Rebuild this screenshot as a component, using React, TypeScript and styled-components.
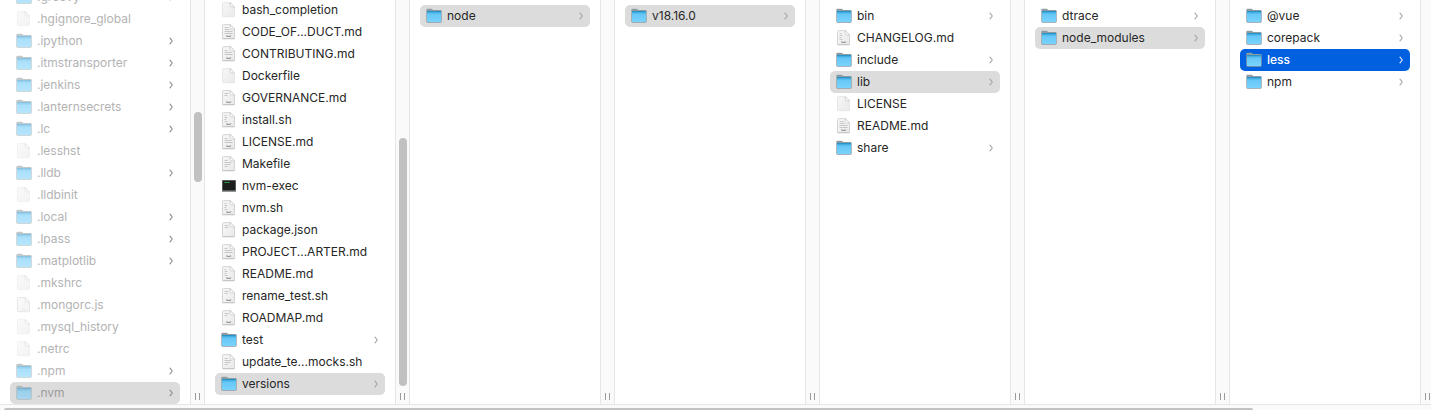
import React, { useState } from 'react';
import styled, { createGlobalStyle, css } from 'styled-components';

const GlobalStyle = createGlobalStyle`
  *, *::before, *::after { box-sizing: border-box; }
  body { margin: 0; background: #fff; font-family: Inter, "Liberation Sans", sans-serif; }
`;

const Browser = styled.main`
  display: flex;
  flex-direction: column;
  height: 100vh;
  overflow: hidden;
`;

const Columns = styled.div`
  display: flex;
  flex: 1;
  min-height: 0;
  overflow: hidden;
`;

const Column = styled.section`
  display: flex;
  flex: 1 0 205px;
  min-height: 0;
`;

const List = styled.ul<{ $fromEnd?: boolean; $padBottom: number }>`
  display: flex;
  flex-direction: column;
  flex: 1;
  min-width: 0;
  justify-content: ${p => (p.$fromEnd ? 'flex-end' : 'flex-start')};
  margin: 0;
  padding: ${p => (p.$fromEnd ? 0 : 5)}px 10px ${p => p.$padBottom}px;
  overflow: hidden;
  list-style: none;
`;

const Item = styled.li`
  flex: none;
`;

type Tone = 'active' | 'path' | 'none';

const Row = styled.button<{ $tone: Tone; $dim?: boolean }>`
  display: flex;
  align-items: center;
  gap: 5px;
  width: 100%;
  height: 22px;
  padding: 0 6px;
  border: 0;
  border-radius: 5px;
  background: transparent;
  color: ${p => (p.$dim ? '#b3b3b3' : '#262626')};
  font: 400 12px/22px Inter, "Liberation Sans", sans-serif;
  text-align: left;
  ${p => p.$tone === 'path' && css`
    background: #dcdcdc;
    color: ${p.$dim ? '#9b9b9b' : '#262626'};
  `}
  ${p => p.$tone === 'active' && css`
    background: #0060df;
    color: #fff;
    font-weight: 500;
  `}
`;

const Name = styled.span`
  flex: 1;
  white-space: nowrap;
`;

const IconBox = styled.svg<{ $dim?: boolean }>`
  flex: none;
  opacity: ${p => (p.$dim ? 0.55 : 1)};
`;

const Arrow = styled.svg<{ $tone: Tone; $dim?: boolean }>`
  flex: none;
  color: ${p => (p.$tone === 'active' ? '#e4edfb' : p.$dim ? '#8c8c8c' : '#a3a3a3')};
`;

const Gutter = styled.div`
  display: flex;
  flex-direction: column;
  flex: none;
  width: 15px;
  border: solid #e6e6e6;
  border-width: 0 1px;
  background: #fafafa;
`;

const Track = styled.div`
  display: flex;
  flex: 1;
  flex-direction: column;
  align-items: center;
`;

const Space = styled.div<{ $share: number }>`
  flex: ${p => p.$share} 0 0;
`;

const Thumb = styled.div<{ $share: number }>`
  flex: ${p => p.$share} 0 0;
  width: 8px;
  border-radius: 4px;
  background: #c1c1c1;
`;

const Grip = styled.div`
  flex: none;
  align-self: center;
  width: 5px;
  height: 7px;
  margin: 5px 0 4px;
  border: solid #9c9c9c;
  border-width: 0 1px;
`;

const BottomTrack = styled.div`
  display: flex;
  flex: none;
  height: 6px;
  padding-top: 3px;
  border-top: 1px solid #e6e6e6;
  background: #fafafa;
`;

const BottomThumb = styled.div<{ $share: number }>`
  flex: ${p => p.$share} 0 0;
  border-radius: 4px 4px 0 0;
  background: #c1c1c1;
`;

type Kind = 'folder' | 'blank' | 'full' | 'two' | 'light' | 'sparse' | 'top' | 'mid' | 'script' | 'exec';
type Entry = [name: string, kind: Kind];

const docLines: Record<string, string> = {
  blank: '',
  full: 'M3.5 3.5h4M3.5 5.5h5M3.5 7.5h8M3.5 9.5h8',
  two: 'M3.5 4.5h3M3.5 6.5h7M3.5 8.5h8',
  light: 'M3.5 3.5h4M3.5 5.5h3',
  sparse: 'M3.5 3.5h2M3.5 5.5h3M3.5 7.5h2M3.5 9.5h3',
  top: 'M3.5 3.5h4M3.5 5.5h4',
  mid: 'M3.5 4.5h3M3.5 6.5h7M3.5 8.5h6M3.5 10.5h3',
  script: 'M7 12.5h2',
};
const labelled: Kind[] = ['full', 'two', 'light', 'sparse'];

function Icon({ kind, dim }: { kind: Kind; dim?: boolean }) {
  if (kind === 'folder') {
    return (
      <IconBox $dim={dim} width="16" height="16" viewBox="0 0 16 16" aria-hidden="true">
        <defs>
          <linearGradient id="folder-front" x1="0" y1="0" x2="0" y2="1">
            <stop offset="0" stopColor="#62c4f5" />
            <stop offset="1" stopColor="#79d3fd" />
          </linearGradient>
        </defs>
        <path d="M.3 2q0-1.3 1.3-1.3h3.6q.8 0 1.3.6l.6.6h7.3q1.3 0 1.3 1.3v10.4q0 1.1-1.1 1.1H1.4q-1.1 0-1.1-1.1z" fill="#8d9ca4" />
        <path d="M1 3h14v2.5H1z" fill="#2793c6" />
        <path d="M1 4.6h14v8.7q0 .7-.7.7H1.7q-.7 0-.7-.7z" fill="url(#folder-front)" />
        <path d="M1 5h14" stroke="#45afe4" strokeWidth=".8" />
      </IconBox>
    );
  }
  if (kind === 'exec') {
    return (
      <IconBox width="16" height="16" viewBox="0 0 16 16" aria-hidden="true">
        <path d="M1 2h14v12H1z" fill="#92979a" />
        <path d="M1.5 2.5h13v10h-13z" fill="#1c1e1e" />
        <path d="M3.5 4.5h5" stroke="#36c257" strokeDasharray="1.3 .5" />
      </IconBox>
    );
  }
  return (
    <IconBox $dim={dim} width="16" height="16" viewBox="0 0 16 16" aria-hidden="true">
      <defs>
        <linearGradient id="paper" x1="0" y1="0" x2="1" y2="1">
          <stop offset="0" stopColor="#f8f8f8" />
          <stop offset="1" stopColor="#e9e9e9" />
        </linearGradient>
      </defs>
      <path
        d="M2.4.6h6.8l4.3 4.3v9q0 .8-.8.8H2.3q-.8 0-.8-.8V1.5q0-.9.9-.9z"
        fill="url(#paper)"
        stroke={kind === 'blank' ? '#e2e2e2' : '#cbcbcb'}
        strokeWidth=".8"
      />
      {kind !== 'blank' && kind !== 'script' && <path d="M1.5 14.7h12" stroke="#b8b8b8" strokeWidth=".7" />}
      <path d="M9.2.6v3.3q0 1 1 1h3.3z" fill="#fff" stroke="#c4c4c4" strokeWidth=".7" />
      <path d={docLines[kind]} stroke="#c2c2c2" strokeWidth=".9" fill="none" />
      {labelled.includes(kind) && <path d="M5 12h1.2l1 .5h1l1-.5h1" fill="none" stroke="#8f8f8f" strokeWidth="1.1" />}
    </IconBox>
  );
}

interface ColumnData {
  label: string;
  entries: Entry[];
  path?: string;
  active?: string;
  dim?: boolean;
  fromEnd?: boolean;
  padBottom?: number;
  thumb?: [number, number, number];
}

const columns: ColumnData[] = [
  {
    label: 'Home', dim: true, fromEnd: true, path: '.nvm', thumb: [112, 70, 206],
    entries: [
      ['.groovy', 'folder'], ['.hgignore_global', 'blank'], ['.ipython', 'folder'],
      ['.itmstransporter', 'folder'], ['.jenkins', 'folder'], ['.lanternsecrets', 'folder'],
      ['.lc', 'folder'], ['.lesshst', 'blank'], ['.lldb', 'folder'], ['.lldbinit', 'blank'],
      ['.local', 'folder'], ['.lpass', 'folder'], ['.matplotlib', 'folder'], ['.mkshrc', 'blank'],
      ['.mongorc.js', 'script'], ['.mysql_history', 'blank'], ['.netrc', 'blank'],
      ['.npm', 'folder'], ['.nvm', 'folder'],
    ],
  },
  {
    label: '.nvm', fromEnd: true, padBottom: 9, path: 'versions', thumb: [138, 248, 2],
    entries: [
      ['bash_completion', 'blank'], ['CODE_OF...DUCT.md', 'full'], ['CONTRIBUTING.md', 'two'],
      ['Dockerfile', 'blank'], ['GOVERNANCE.md', 'light'], ['install.sh', 'sparse'],
      ['LICENSE.md', 'two'], ['Makefile', 'mid'], ['nvm-exec', 'exec'], ['nvm.sh', 'sparse'],
      ['package.json', 'top'], ['PROJECT...ARTER.md', 'two'], ['README.md', 'sparse'],
      ['rename_test.sh', 'light'], ['ROADMAP.md', 'light'], ['test', 'folder'],
      ['update_te...mocks.sh', 'mid'], ['versions', 'folder'],
    ],
  },
  { label: 'versions', path: 'node', entries: [['node', 'folder']] },
  { label: 'node', path: 'v18.16.0', entries: [['v18.16.0', 'folder']] },
  {
    label: 'v18.16.0', path: 'lib',
    entries: [
      ['bin', 'folder'], ['CHANGELOG.md', 'sparse'], ['include', 'folder'], ['lib', 'folder'],
      ['LICENSE', 'blank'], ['README.md', 'full'], ['share', 'folder'],
    ],
  },
  { label: 'lib', path: 'node_modules', entries: [['dtrace', 'folder'], ['node_modules', 'folder']] },
  {
    label: 'node_modules', active: 'less',
    entries: [['@vue', 'folder'], ['corepack', 'folder'], ['less', 'folder'], ['npm', 'folder']],
  },
];

function FileColumn({ data }: { data: ColumnData }) {
  const [active, setActive] = useState(data.active);
  const { dim, thumb } = data;
  return (
    <Column aria-label={data.label}>
      <List $fromEnd={data.fromEnd} $padBottom={data.padBottom ?? 0}>
        {data.entries.map(([name, kind]) => {
          const tone: Tone = name === active ? 'active' : name === data.path ? 'path' : 'none';
          return (
            <Item key={name}>
              <Row
                type="button"
                $tone={tone}
                $dim={dim}
                aria-pressed={tone !== 'none'}
                onClick={() => data.active && setActive(name)}
              >
                <Icon kind={kind} dim={dim} />
                <Name>{name}</Name>
                {kind === 'folder' && (
                  <Arrow $tone={tone} $dim={dim} width="5" height="8" viewBox="0 0 5 8" aria-hidden="true">
                    <path d="M1 1.2l2.3 2.8L1 6.8" fill="none" stroke="currentColor" strokeWidth="1.1" strokeLinecap="round" strokeLinejoin="round" />
                  </Arrow>
                )}
              </Row>
            </Item>
          );
        })}
      </List>
      <Gutter>
        <Track>
          {thumb && (
            <>
              <Space $share={thumb[0]} />
              <Thumb $share={thumb[1]} />
              <Space $share={thumb[2]} />
            </>
          )}
        </Track>
        <Grip />
      </Gutter>
    </Column>
  );
}

export default function App() {
  return (
    <>
      <GlobalStyle />
      <Browser>
        <Columns>
          {columns.map(data => <FileColumn key={data.label} data={data} />)}
        </Columns>
        <BottomTrack>
          <Space $share={4} />
          <BottomThumb $share={1249} />
          <Space $share={178} />
        </BottomTrack>
      </Browser>
    </>
  );
}
